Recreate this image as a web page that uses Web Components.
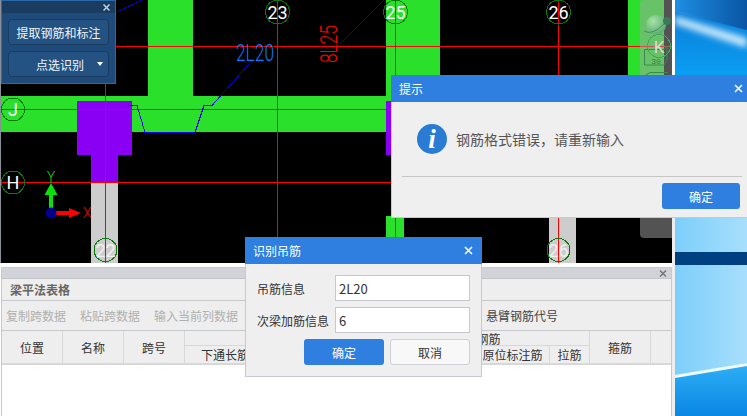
<!DOCTYPE html>
<html lang="zh">
<head>
<meta charset="utf-8">
<title>识别吊筋</title>
<style>
html,body{margin:0;padding:0;width:747px;height:416px;overflow:hidden;background:#fff}
body{font:12px "Noto Sans CJK SC","Liberation Sans",sans-serif;color:#333}
</style>
</head>
<body>
<template id="t-app">
<style>
:host{display:grid;grid-template-columns:672px 3px 72px;width:747px;height:416px;position:relative;overflow:hidden;background:#fff}
.left{display:flex;flex-direction:column;gap:4px;padding-left:1px;box-sizing:border-box;background:linear-gradient(#8a8f98 0 263px,#fff 263px);min-width:0}
.strip{background:linear-gradient(#fff 0 218px,#eee 218px)}
</style>
<div class="left"><slot name="main"></slot></div>
<div class="strip"></div>
<slot name="desktop"></slot>
<slot></slot>
</template>

<template id="t-cad">
<style>
:host{display:block;position:relative;width:671px;height:263px;background:#000;flex:none}
svg{display:block}
.b{fill:none;stroke:#0a7a0a;stroke-width:1;shape-rendering:crispEdges}
.n{fill:#fff;font-size:18px;text-anchor:middle;font-family:Roboto,"Liberation Sans",sans-serif}
.cad{font-weight:300;font-size:24px;font-family:Roboto,"DejaVu Sans",sans-serif}
</style>
<svg width="671" height="263" viewBox="1 0 671 263">
  <defs>
    <radialGradient id="sph" cx=".35" cy=".3" r=".8"><stop offset="0" stop-color="#a5e2a5"/><stop offset="1" stop-color="#55a56a"/></radialGradient>
  </defs>
  <g fill="#2be02b">
    <rect x="148" y="0" width="45" height="96"/>
    <rect x="386" y="0" width="54" height="96"/>
    <rect x="0" y="96" width="392" height="36"/>
    <rect x="628" y="0" width="36" height="76"/>
    <rect x="386" y="216" width="18" height="47"/>
  </g>
  <g fill="#8a00f5">
    <rect x="77" y="101" width="55" height="54"/>
    <rect x="91" y="155" width="27" height="27"/>
    <rect x="386" y="101" width="6" height="54"/>
  </g>
  <g fill="#cdcdcd">
    <rect x="91" y="182" width="27" height="81"/>
    <rect x="549" y="182" width="27" height="81"/>
  </g>
  <g stroke="#f00" stroke-width="1" shape-rendering="crispEdges">
    <path d="M0 46.500H672M0 109.500H392M0 182.500H392"/>
    <path d="M105.500 0V263M277.500 0V263M395.500 0V263M558.500 0V263"/>
  </g>
  <g fill="none" stroke="#0000e6" stroke-width="1" shape-rendering="crispEdges">
    <path d="M127 105.500H137L145 132.500H195L204 105.500H212L250 63"/>
    <path d="M340 44L384 0M117 12L142 0"/>
  </g>
  <text class="cad" x="236" y="61" fill="#0a7cff" textLength="38" lengthAdjust="spacingAndGlyphs">2L20</text>
  <text class="cad" transform="translate(337 63) rotate(-90)" x="0" y="0" fill="#f00" textLength="38" lengthAdjust="spacingAndGlyphs">8L25</text>
  <circle class="b" cx="277.500" cy="12" r="12"/><text class="n" x="277.500" y="19">23</text>
  <circle class="b" cx="395.500" cy="12" r="12"/><text class="n" x="395.500" y="19">25</text>
  <circle class="b" cx="558.500" cy="12" r="12"/><text class="n" x="558.500" y="19">26</text>
  <circle class="b" cx="13" cy="109.500" r="11.500"/><text class="n" x="13" y="116">J</text>
  <circle class="b" cx="13" cy="182.500" r="11.500"/><text class="n" x="13" y="189">H</text>
  <circle class="b" cx="105.500" cy="250" r="11.500"/><text class="n" x="105.500" y="257" style="fill:#f0f0f0">22</text>
  <circle class="b" cx="558.500" cy="250" r="11.500"/><text class="n" x="558.500" y="257" style="fill:#f0f0f0">26</text>
  <g>
    <path d="M49 213V195H44.500L51 183L57.500 195H53V213Z" fill="#0be00b"/>
    <path d="M51 211H69V208L81 213L69 218V215H51Z" fill="#f00"/>
    <circle cx="51" cy="213" r="5.500" fill="#00008c"/>
    <path d="M47.500 171L51 177V183M54.500 171L51 177" fill="none" stroke="#0be00b" stroke-width="1"/>
    <text x="83" y="218" font-size="14" fill="#f00" style="font-family:Roboto,sans-serif;font-weight:300">X</text>
  </g>
  <path d="M640 3a3 3 0 0 1 3-3H672V238H644a4 4 0 0 1-4-4Z" fill="rgba(165,165,165,.5)"/>
  <circle cx="656" cy="25" r="10" fill="url(#sph)"/>
  <circle cx="667" cy="21" r="4" fill="#3a7a5a"/>
  <path d="M644 31q8 5 20-7" fill="none" stroke="#3f8f5f"/>
  <g fill="none" stroke="#3a8a50">
    <path d="M644.500 49.500H664L667 46V60L664 65H644.500Z"/>
    <path d="M645.500 76V75L650 72.500H668"/>
  </g>
  <text x="656" y="64" font-size="8" fill="#2f7f4f" text-anchor="middle" style="font-family:'Liberation Mono',monospace">30</text>
  <circle cx="659" cy="46" r="11.500" fill="none" stroke="#3fa85f" stroke-width="1" shape-rendering="crispEdges"/>
  <text x="659" y="53" font-size="17" fill="#dcdcdc" text-anchor="middle" style="font-family:Roboto,sans-serif">K</text>
</svg>
<slot></slot>
</template>

<template id="t-tool">
<style>
:host{display:flex;flex-direction:column;position:absolute;left:0;top:0;width:115px;height:84px;box-sizing:border-box;background:#1f4b7a;border:1px solid #2b6aa8;color:#fff;font-size:12px}
.bar{height:12px;background:#1a3c60;display:flex;justify-content:flex-end;align-items:center;padding-right:5px}
svg{display:block}
.body{display:flex;flex-direction:column;gap:6px;padding:6px 6px 0 6px}
</style>
<div class="bar"><svg width="7" height="7" viewBox="0 0 7 7"><path d="M.5.500L6.500 6.500M6.500.500L.5 6.500" stroke="#bcd0e4" stroke-width="1.500"/></svg></div>
<div class="body"><slot></slot></div>
</template>

<template id="t-tbtn">
<style>
:host{display:flex;align-items:center;justify-content:center;position:relative;height:26px;box-sizing:border-box;background:#235283;border:1px solid #1a3c60;border-radius:4px;color:#f2f6fa;white-space:nowrap}
:host([caret]){padding-left:3px}
:host([caret]) i{position:absolute;right:5px;top:10px;border:3.500px solid transparent;border-top:4px solid #fff;border-bottom:0;width:0;height:0}
</style>
<slot></slot><i></i>
</template>

<template id="t-table">
<style>
:host{display:flex;flex-direction:column;width:671px;height:149px;box-sizing:border-box;background:#fff;border:1px solid #c8c9cc;border-bottom:0;flex:none}
.bar{height:10px;background:#d2d3d8;border-bottom:1px solid #c4c5c9;display:flex;justify-content:flex-end;align-items:center;padding-right:4px}
svg{display:block}
.title{height:21px;background:#eee;border-bottom:1px solid #c8c9cc;display:flex;align-items:center;padding-left:8px;font-weight:700;color:#666}
.tools{height:30px;background:#eee;box-sizing:border-box;display:flex;align-items:center;padding-left:4px;gap:14px;color:#b0b0b0;border-bottom:1px solid #c8c9cc;position:relative}
.tools .on{color:#444;margin-left:234px}
.grid{display:grid;grid-template-columns:61px 61px 61px 81px 122px 88px 74px 40px 61px 20px;grid-template-rows:15px 17px;background:#eee;border-bottom:2px solid #d8d8d8}
.grid>div{display:flex;align-items:center;justify-content:center;border-right:1px solid #d8d8d8;box-sizing:border-box;white-space:nowrap;color:#333;min-width:0;overflow:hidden}
.r{grid-row:1/3}
.t{border-bottom:1px solid #d8d8d8}
.rows{flex:1;background:#fff}
</style>
<div class="bar"><svg width="8" height="7" viewBox="0 0 8 7"><path d="M1 .5L7 6.500M7 .5L1 6.500" stroke="#777" stroke-width="1.500"/></svg></div>
<div class="title">梁平法表格</div>
<div class="tools"><span>复制跨数据</span><span>粘贴跨数据</span><span>输入当前列数据</span><span class="on">悬臂钢筋代号</span></div>
<div class="grid">
  <div class="r">位置</div><div class="r">名称</div><div class="r">跨号</div>
  <div class="t" style="grid-column:4/6"></div>
  <div class="t" style="grid-column:6/9">钢筋</div>
  <div class="r" style="grid-column:9;grid-row:1/3">箍筋</div>
  <div class="r" style="grid-column:10;grid-row:1/3;border-right:0"></div>
  <div style="grid-column:4;grid-row:2">下通长筋</div>
  <div style="grid-column:5;grid-row:2"></div>
  <div style="grid-column:6;grid-row:2"></div>
  <div style="grid-column:7;grid-row:2">原位标注筋</div>
  <div style="grid-column:8;grid-row:2">拉筋</div>
</div>
<div class="rows"></div>
</template>

<template id="t-dialog">
<style>
:host{display:flex;flex-direction:column;position:absolute;box-sizing:border-box;background:#efefef;border:1px solid #c6c9d2;border-top:0;color:#333;font-size:12px}
.head{height:27px;margin:0 -1px;flex:none;background:#2f7fe0;color:#fff;display:flex;align-items:center;justify-content:space-between;padding:0 var(--xr,9px) 0 8px}
svg{display:block}
.body{flex:1;display:flex;flex-direction:column;min-height:0}
</style>
<div class="head"><span><slot name="title"></slot></span><svg width="9" height="9" viewBox="0 0 9 9"><path d="M1 1L8 8M8 1L1 8" stroke="#fff" stroke-width="1.500"/></svg></div>
<div class="body"><slot></slot></div>
</template>

<template id="t-btn">
<style>
:host{display:flex;align-items:center;justify-content:center;width:80px;height:26px;box-sizing:border-box;border-radius:3px;background:#2f7fe0;color:#fff;font-size:12px}
:host([plain]){background:#f8f8f8;border:1px solid #ced1d8;color:#333}
</style>
<slot></slot>
</template>

<template id="t-field">
<style>
:host{display:grid;grid-template-columns:78px 135px;align-items:center;height:26px;font-size:12px;color:#333}
.v{height:26px;box-sizing:border-box;background:#fff;border:1px solid #c6c8ce;display:flex;align-items:center;padding-left:3px;font-size:13px}
</style>
<span><slot name="label"></slot></span><div class="v"><slot></slot></div>
</template>

<template id="t-desk">
<style>
:host{display:block;height:416px;overflow:hidden}
svg{display:block}
</style>
<svg width="72" height="416" viewBox="675 0 72 416">
  <defs>
    <linearGradient id="g1" x1="0" y1="0" x2="1" y2="0"><stop offset="0" stop-color="#1e8ee2"/><stop offset="1" stop-color="#0a55a4"/></linearGradient>
    <linearGradient id="g2" x1="0" y1="0" x2="0" y2="1"><stop offset="0" stop-color="#0a78d4"/><stop offset="1" stop-color="#0aa6f8"/></linearGradient>
    <linearGradient id="g3" x1="0" y1="0" x2="1" y2="0"><stop offset="0" stop-color="#7ccffb"/><stop offset="1" stop-color="#a8defc"/></linearGradient>
    <linearGradient id="g4" x1="0" y1="0" x2="0" y2="1"><stop offset="0" stop-color="#2fb0f6"/><stop offset="1" stop-color="#0a86e4"/></linearGradient>
    <filter id="bl"><feGaussianBlur stdDeviation="3"/></filter>
    <filter id="bl2"><feGaussianBlur stdDeviation=".7"/></filter>
  </defs>
  <rect x="675" y="0" width="72" height="90" fill="url(#g2)"/>
  <path d="M675 0H747V30L675 12Z" fill="url(#g1)"/>
  <path d="M675 16L747 38V48L675 24Z" fill="#c8e8fa" filter="url(#bl)"/>
  <rect x="675" y="218" width="72" height="34" fill="url(#g3)"/>
  <rect x="675" y="252" width="72" height="13" fill="#003f80"/>
  <rect x="675" y="265" width="72" height="112" fill="url(#g3)"/>
  <path d="M675 376L747 363V416H675Z" fill="url(#g4)"/>
  <path d="M675 376.500L747 364.500" stroke="#f0fbff" stroke-width="3" filter="url(#bl2)"/>
</svg>
</template>

<x-app>
  <cad-canvas slot="main"><tool-panel><tool-btn>提取钢筋和标注</tool-btn><tool-btn caret>点选识别</tool-btn></tool-panel></cad-canvas>
  <beam-table slot="main"></beam-table>
  <desk-bg slot="desktop"></desk-bg>

  <x-dialog style="left:391px;top:75px;width:356px;height:143px;border-right:0;--xr:5px">
    <span slot="title">提示</span>
    <div style="display:flex;align-items:center;gap:9px;height:74px;padding-left:25px;box-sizing:border-box;font-size:14px;color:#555">
      <svg width="30" height="30" viewBox="0 0 30 30" style="flex:none"><circle cx="15" cy="15" r="15" fill="#2a7bd4"/><text x="15" y="24" text-anchor="middle" font-size="27" font-weight="700" font-style="italic" fill="#fff" style="font-family:'Liberation Serif',serif">i</text></svg>
      <span>钢筋格式错误，请重新输入</span>
    </div>
    <div style="height:1px;background:#c6c6c6;margin:0 5px 0 10px"></div>
    <div style="display:flex;justify-content:flex-end;padding:6px 7px 0 0"><x-btn style="width:78px">确定</x-btn></div>
  </x-dialog>

  <x-dialog style="left:245px;top:237px;width:237px;height:140px">
    <span slot="title">识别吊筋</span>
    <div style="display:flex;flex-direction:column;gap:6px;padding:11px 11px 0 11px">
      <x-field><span slot="label">吊筋信息</span>2L20</x-field>
      <x-field><span slot="label">次梁加筋信息</span>6</x-field>
      <div style="display:flex;justify-content:flex-end;gap:6px"><x-btn>确定</x-btn><x-btn plain>取消</x-btn></div>
    </div>
  </x-dialog>
</x-app>

<script>
function reg(name,tpl){
  customElements.define(name,class extends HTMLElement{
    constructor(){super();this.attachShadow({mode:"open"}).appendChild(document.getElementById(tpl).content.cloneNode(true));}
  });
}
reg("x-app","t-app");reg("cad-canvas","t-cad");reg("tool-panel","t-tool");reg("tool-btn","t-tbtn");
reg("beam-table","t-table");reg("x-dialog","t-dialog");reg("x-btn","t-btn");reg("x-field","t-field");reg("desk-bg","t-desk");
</script>
</body>
</html>
